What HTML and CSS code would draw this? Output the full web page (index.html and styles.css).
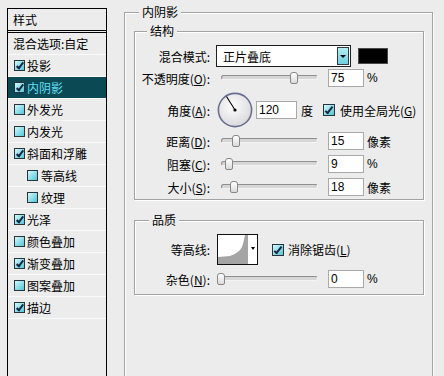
FILE: index.html
```html
<!DOCTYPE html>
<html lang="zh-CN">
<head>
	<meta charset="UTF-8">
	<meta name="viewport" content="width=device-width, initial-scale=1.0">
	<title>图层样式 - 内阴影</title>
	<link rel="stylesheet" href="styles.css">
</head>
<body>
<div class="dialog">
	<!-- STYLE LIST -->
	<aside class="styles-list">
		<div class="list-head">样式</div>
		<ul class="list">
			<li class="item plain">混合选项:自定</li>
			<li class="item"><span class="cb on"></span>投影</li>
			<li class="item selected"><span class="cb on"></span>内阴影</li>
			<li class="item"><span class="cb"></span>外发光</li>
			<li class="item"><span class="cb"></span>内发光</li>
			<li class="item"><span class="cb on"></span>斜面和浮雕</li>
			<li class="item sub"><span class="cb"></span>等高线</li>
			<li class="item sub"><span class="cb"></span>纹理</li>
			<li class="item"><span class="cb on"></span>光泽</li>
			<li class="item"><span class="cb"></span>颜色叠加</li>
			<li class="item"><span class="cb on"></span>渐变叠加</li>
			<li class="item"><span class="cb"></span>图案叠加</li>
			<li class="item"><span class="cb on"></span>描边</li>
		</ul>
	</aside>

	<!-- SETTINGS -->
	<main class="panel">
		<fieldset class="group outer">
			<legend>内阴影</legend>

			<fieldset class="group structure">
				<legend>结构</legend>

				<div class="row mode-row">
					<label class="lbl">混合模式:</label>
					<div class="select">
						<span class="select-text">正片叠底</span>
						<span class="select-btn"></span>
					</div>
					<span class="swatch"></span>
				</div>

				<div class="row first-slider">
					<label class="lbl">不透明度(<u>O</u>):</label>
					<div class="slider"><div class="track"></div><span class="thumb" style="left: 74px"></span></div>
					<span class="field">75</span>
					<span class="unit num">%</span>
				</div>

				<div class="row angle-row">
					<label class="lbl">角度(<u>A</u>):</label>
					<svg class="dial" width="36" height="36" viewBox="0 0 36 36">
						<defs>
							<radialGradient id="dialFill" cx="42%" cy="38%" r="65%">
								<stop offset="0" stop-color="#fdfdfd"/>
								<stop offset="1" stop-color="#d9d9dc"/>
							</radialGradient>
						</defs>
						<circle cx="18" cy="18" r="16.6" fill="url(#dialFill)" stroke="#6a6f90" stroke-width="1.6"/>
						<line x1="18" y1="18" x2="9.5" y2="4.5" stroke="#000" stroke-width="1.1"/>
						<circle cx="18" cy="18" r="1.6" fill="#000"/>
					</svg>
					<span class="field wide">120</span>
					<span class="unit deg">度</span>
					<span class="cb big on"></span>
					<span class="check-text">使用全局光(<u>G</u>)</span>
				</div>

				<div class="row slider-row tight">
					<label class="lbl">距离(<u>D</u>):</label>
					<div class="slider"><div class="track"></div><span class="thumb" style="left: 16px"></span></div>
					<span class="field">15</span>
					<span class="unit">像素</span>
				</div>

				<div class="row slider-row">
					<label class="lbl">阻塞(<u>C</u>):</label>
					<div class="slider"><div class="track"></div><span class="thumb" style="left: 9px"></span></div>
					<span class="field">9</span>
					<span class="unit num">%</span>
				</div>

				<div class="row slider-row">
					<label class="lbl">大小(<u>S</u>):</label>
					<div class="slider"><div class="track"></div><span class="thumb" style="left: 14px"></span></div>
					<span class="field">18</span>
					<span class="unit">像素</span>
				</div>
			</fieldset>

			<fieldset class="group quality">
				<legend>品质</legend>

				<div class="row contour-row">
					<label class="lbl">等高线:</label>
					<svg class="contour" width="41" height="31" viewBox="0 0 41 31">
						<rect x="0.5" y="0.5" width="40" height="30" fill="#fff" stroke="#111"/>
						<path d="M1 23 L13 22 Q22 19 25 13 Q27 7 28 1 L31 1 L31 30 L1 30 Z" fill="#a4a4a4"/>
						<path d="M34 13 L38 13 L36 16 Z" fill="#000"/>
					</svg>
					<span class="cb big on aa"></span>
					<span class="check-text">消除锯齿(<u>L</u>)</span>
				</div>

				<div class="row slider-row">
					<label class="lbl">杂色(<u>N</u>):</label>
					<div class="slider"><div class="track"></div><span class="thumb" style="left: 1px"></span></div>
					<span class="field">0</span>
					<span class="unit num">%</span>
				</div>
			</fieldset>
		</fieldset>
	</main>
</div>
</body>
</html>
```

FILE: styles.css
```css
html,
body {
	margin: 0;
	height: 100%;
	overflow: hidden;
}

body {
	background: #ececec;
	font-family: "Noto Sans CJK SC", sans-serif;
	font-size: 12px;
	color: #000;
}

.dialog {
	display: flex;
	height: 100%;
}

/* STYLE LIST ON THE LEFT */
.styles-list {
	box-sizing: border-box;
	width: 100px;
	margin: 8px 0 0 7px;
	border: 1px solid #000;
	border-bottom: none;
	flex: none;
}

.list-head {
	height: 21px;
	line-height: 21px;
	padding-left: 5px;
	border-bottom: 1px solid #000;
}

.list {
	list-style: none;
	margin: 1px 0 0;
	padding: 0;
	border-top: 1px solid #000;
}

.item {
	display: flex;
	align-items: center;
	height: 21px;
	padding-left: 6px;
	border-bottom: 1px solid #fafafa;
	white-space: nowrap;
}

.item.plain {
	padding-left: 5px;
}

.item.sub {
	padding-left: 19px;
}

.item.sub .cb {
	margin-right: 3px;
}

.item.selected {
	background: #0b4a54;
	color: #62def6;
}

/* CYAN CHECKBOX */
.cb {
	position: relative;
	box-sizing: border-box;
	width: 11px;
	height: 11px;
	margin-right: 2px;
	border: 1px solid #26343c;
	background: linear-gradient(135deg, #d8f8fb 0%, #97e2ec 45%, #58c4d3 100%);
	flex: none;
}

.cb.on::after {
	content: "";
	position: absolute;
	left: 3px;
	top: 0;
	width: 2px;
	height: 6px;
	border: solid #162640;
	border-width: 0 2px 2px 0;
	transform: rotate(38deg);
}

.cb.big {
	width: 12px;
	height: 12px;
	margin: 0 5px 0 10px;
}

.cb.big.on::after {
	left: 3px;
	top: 0;
	height: 7px;
}

.cb.aa {
	margin-left: 14px;
	margin-right: 4px;
}

/* SETTINGS PANEL */
.panel {
	display: flex;
	flex-direction: column;
	margin-left: 17px;
	padding-top: 4px;
}

.group {
	margin: 0;
	padding: 0;
	min-width: 0;
	border: 1px solid #a2a2a2;
	box-shadow: inset 1px 1px 0 #fff, 1px 1px 0 #fff;
}

.group > legend {
	padding: 0 3px;
	line-height: 16px;
	background: #ececec;
}

.outer {
	box-sizing: border-box;
	width: 309px;
	flex: 1;
	padding: 0 8px 0 9px;
	border-bottom: none;
}

.outer > legend {
	margin-left: 5px;
}

.structure {
	margin-top: 3px;
	padding-bottom: 3px;
}

.structure > legend {
	margin-left: 12px;
}

.quality {
	margin-top: 12px;
	padding-bottom: 6px;
}

.quality > legend {
	margin-left: 14px;
}

/* ROWS */
.row {
	display: flex;
	align-items: center;
	height: 18px;
	margin-top: 5px;
	white-space: nowrap;
}

.lbl {
	width: 75px;
	text-align: right;
	flex: none;
}

.mode-row {
	height: 22px;
	margin-top: 6px;
}

.first-slider {
	margin-top: 2px;
}

.angle-row {
	height: 36px;
	margin-top: 5px;
}

.tight {
	margin-top: 4px;
}

.contour-row {
	height: 31px;
	margin-top: 6px;
}

/* BLEND MODE SELECT */
.select {
	box-sizing: border-box;
	display: flex;
	align-items: center;
	width: 135px;
	height: 22px;
	margin-left: 6px;
	border: 1px solid #1e1e1e;
	background: #fff;
}

.select-text {
	flex: 1;
	padding-left: 6px;
}

.select-btn {
	box-sizing: border-box;
	display: flex;
	align-items: center;
	justify-content: center;
	width: 12px;
	height: 18px;
	margin-right: 1px;
	border: 1px solid #2d3d44;
	background: linear-gradient(180deg, #b5edf3, #6fd0df);
}

.select-btn::after {
	content: "";
	border-left: 3px solid transparent;
	border-right: 3px solid transparent;
	border-top: 3px solid #000;
}

.swatch {
	box-sizing: border-box;
	width: 30px;
	height: 16px;
	margin-left: 7px;
	background: #000;
	border: 1px solid #4a4a4a;
}

/* SLIDERS */
.slider {
	position: relative;
	box-sizing: border-box;
	width: 112px;
	height: 18px;
	margin-left: 6px;
	padding: 6px 0 0 5px;
	flex: none;
}

.track {
	box-sizing: border-box;
	width: 97px;
	height: 5px;
	border: 1px solid #8f8f8f;
	border-bottom-color: #f4f4f4;
	border-right-color: #f4f4f4;
	border-radius: 3px;
	background: #d6d6d6;
}

.thumb {
	position: absolute;
	top: 3px;
	box-sizing: border-box;
	width: 8px;
	height: 12px;
	border: 1px solid #878787;
	border-radius: 3px 3px 2px 2px;
	background: linear-gradient(180deg, #ffffff, #dadada);
}

/* NUMBER FIELDS */
.field {
	box-sizing: border-box;
	display: flex;
	align-items: center;
	width: 36px;
	height: 18px;
	padding-left: 2px;
	border: 1px solid #a9a9a9;
	background: #fff;
	font-family: "Liberation Sans", Arial, sans-serif;
	font-size: 12px;
}

.field.wide {
	width: 41px;
	margin-left: 3px;
}

.unit {
	margin-left: 3px;
}

.unit.num {
	font-family: "Liberation Sans", Arial, sans-serif;
}

.unit.deg {
	margin-left: 4px;
}

.dial {
	margin-left: 7px;
	flex: none;
}

.contour {
	margin-left: 7px;
	flex: none;
}

.check-text {
	white-space: nowrap;
}
```
